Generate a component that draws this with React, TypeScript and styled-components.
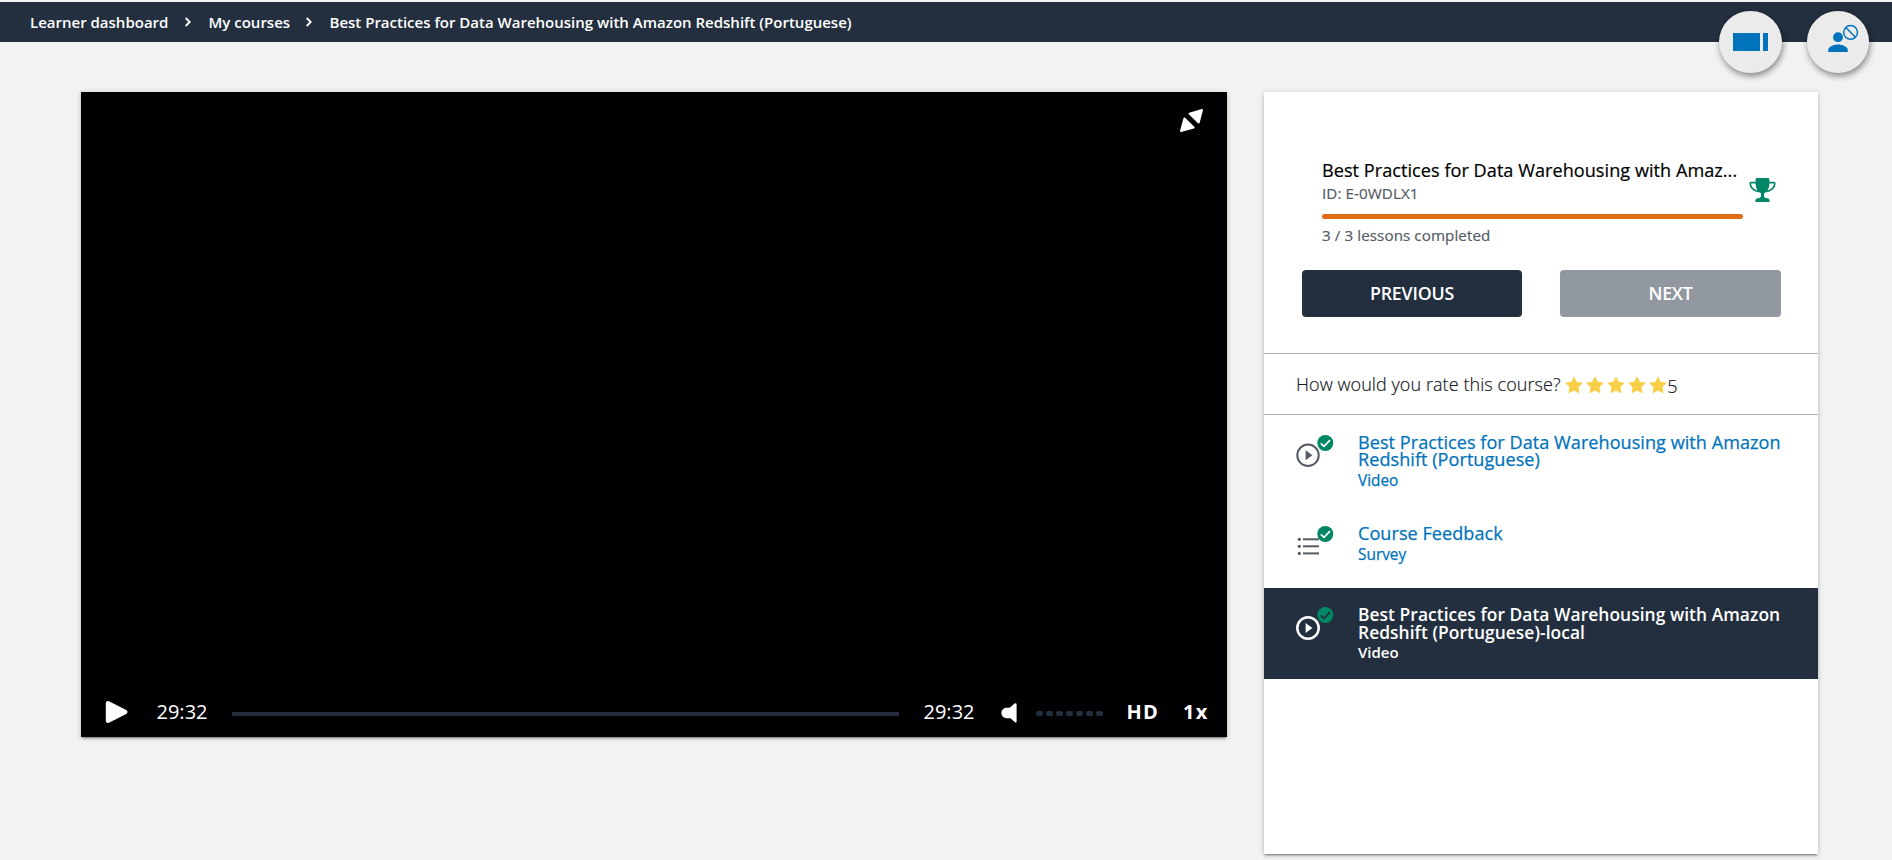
import React from "react";
import styled, { createGlobalStyle } from "styled-components";

const NAVY = "#232f3e";
const BLUE = "#0073bb";
const GREEN = "#018766";

const GlobalStyle = createGlobalStyle`
  * { box-sizing: border-box; }
  body {
    margin: 0;
    background: #f1f3f3;
    font-family: "Open Sans", "Liberation Sans", sans-serif;
    overflow: hidden;
  }
`;

const Page = styled.div`
  height: 860px;
  padding-top: 2px;
`;

const Header = styled.header`
  position: relative;
  height: 40px;
  background: ${NAVY};
`;

const Breadcrumbs = styled.nav`
  display: flex;
  align-items: center;
  height: 40px;
  padding-left: 30px;
  color: #fff;
  font-size: 15px;
  font-weight: 600;
  line-height: 20px;
  white-space: nowrap;
`;

const Crumb = styled.span<{ $width: number }>`
  width: ${(p) => p.$width}px;
`;

const Separator = styled.svg`
  flex: none;
  width: 8px;
  height: 10px;
  margin-left: 16px;
  margin-right: 16.5px;
`;

const FloatingActions = styled.div`
  position: absolute;
  top: 9px;
  right: 23px;
  display: flex;
  gap: 25px;
`;

const RoundButton = styled.button`
  width: 62.5px;
  height: 62px;
  padding: 0;
  border: 0;
  border-radius: 50%;
  background: #ebebeb;
  box-shadow: 1px 3px 6px rgba(0, 0, 0, 0.45);
  svg { display: block; width: 63px; height: 62px; }
`;

const Content = styled.main`
  display: flex;
  align-items: flex-start;
  gap: 37px;
  padding: 50px 74px 0 81px;
`;

const cardShadow = "0 2px 2px -1px rgba(0,0,0,.45), 0 1px 5px rgba(0,0,0,.22)";

const Player = styled.section`
  display: flex;
  flex-direction: column;
  justify-content: space-between;
  width: 1146px;
  height: 645px;
  background: #010002;
  box-shadow: ${cardShadow};
`;

const PlayerTop = styled.div`
  display: flex;
  justify-content: flex-end;
  padding: 17px 24px 0 0;
`;

const Controls = styled.div`
  display: flex;
  align-items: center;
  height: 50px;
  padding-left: 24px;
  color: #fff;
  font-size: 20px;
  line-height: 30px;
`;

const PlayGlyph = styled.svg`
  width: 23px;
  height: 24px;
`;

const Time = styled.span<{ $left: number }>`
  width: 52px;
  margin-left: ${(p) => p.$left}px;
`;

const Track = styled.div`
  width: 667px;
  height: 4px;
  margin: 4px 0 0 23.5px;
  background: ${NAVY};
`;

const Speaker = styled.svg`
  width: 16px;
  height: 20px;
  margin-left: 25.5px;
  margin-top: 2px;
`;

const Volume = styled.div`
  display: flex;
  gap: 3.4px;
  margin: 3px 0 0 19px;
`;

const VolumeStep = styled.i`
  width: 6.6px;
  height: 4.4px;
  border-radius: 2px;
  background: ${NAVY};
`;

const ControlLabel = styled.span<{ $left: number; $width: number }>`
  width: ${(p) => p.$width}px;
  margin-left: ${(p) => p.$left}px;
  font-weight: 700;
  letter-spacing: 1.3px;
`;

const Panel = styled.aside`
  width: 554px;
  height: 762px;
  background: #fff;
  box-shadow: ${cardShadow};
`;

const Summary = styled.div`
  height: 262px;
  padding: 66px 37px 0 38px;
  border-bottom: 1px solid #aab7b8;
`;

const SummaryRow = styled.div`
  display: flex;
  padding-left: 20px;
  height: 87px;
`;

const CourseInfo = styled.div`
  width: 421px;
`;

const CourseTitle = styled.h1`
  margin: 0;
  color: #000;
  font-size: 18.1px;
  font-weight: 400;
  line-height: 24px;
  letter-spacing: 0.04px;
  -webkit-text-stroke: 0.2px;
  white-space: nowrap;
`;

const Detail = styled.div`
  color: #545b64;
  font-size: 15.2px;
  line-height: 20px;
  letter-spacing: 0.08px;
  -webkit-text-stroke: 0.2px;
  margin-top: 1px;
`;

const Progress = styled.div`
  height: 5px;
  margin: 11px 0 6px;
  border-radius: 3px;
  background: #df6c12;
`;

const Trophy = styled.svg`
  width: 27px;
  height: 25px;
  margin: 20px 0 0 6px;
`;

const Buttons = styled.div`
  display: flex;
  justify-content: space-between;
  margin: 25px 0 0;
`;

const NavButton = styled.button<{ $muted?: boolean }>`
  width: ${(p) => (p.$muted ? 221 : 220)}px;
  height: 47px;
  padding: 0;
  border: 0;
  border-radius: 4px;
  background: ${(p) => (p.$muted ? "#91989f" : NAVY)};
  color: #fff;
  font: 600 17.8px/47px "Open Sans", sans-serif;
  letter-spacing: -0.2px;
`;

const Rating = styled.div`
  display: flex;
  align-items: center;
  height: 61px;
  padding-left: 32px;
  border-bottom: 1px solid #aab7b8;
  color: #16191f;
  font-size: 18px;
  font-weight: 300;
  line-height: 24px;
`;

const Question = styled.span`
  width: 268.5px;
  letter-spacing: 0.07px;
  -webkit-text-stroke: 0.2px;
  white-space: nowrap;
`;

const Stars = styled.div`
  display: flex;
  gap: 3.2px;
  margin-top: 1px;
  svg { display: block; width: 18px; height: 18px; }
`;

const Score = styled.span`
  margin-top: 3px;
  -webkit-text-stroke: 0.2px;
`;

const Lessons = styled.ul`
  margin: 0;
  padding: 1px 0 0;
  list-style: none;
`;

const Lesson = styled.li<{ $active?: boolean; $height: number }>`
  display: flex;
  height: ${(p) => p.$height}px;
  padding: 17px 0 0 32px;
  color: ${(p) => (p.$active ? "#fff" : BLUE)};
  background: ${(p) => (p.$active ? NAVY : "transparent")};
`;

const LessonIcon = styled.svg`
  flex: none;
  width: 40px;
  height: 34px;
  margin: 2px 22px 0 0;
`;

const LessonTitle = styled.div<{ $active?: boolean }>`
  padding-top: ${(p) => (p.$active ? 0 : 1)}px;
  font-size: ${(p) => (p.$active ? 17.4 : 18.07)}px;
  font-weight: ${(p) => (p.$active ? 600 : 400)};
  line-height: ${(p) => (p.$active ? 18 : 17)}px;
  letter-spacing: 0.05px;
  -webkit-text-stroke: ${(p) => (p.$active ? 0 : 0.25)}px;
  white-space: pre;
`;

const LessonKind = styled.div<{ $active?: boolean }>`
  margin-top: ${(p) => (p.$active ? 1 : 3)}px;
  font-size: ${(p) => (p.$active ? 15 : 15.4)}px;
  font-weight: ${(p) => (p.$active ? 600 : 400)};
  line-height: 20px;
  -webkit-text-stroke: ${(p) => (p.$active ? 0 : 0.25)}px;
`;

const Chevron = () => (
  <Separator viewBox="0 0 8 10" fill="none" stroke="#fff" strokeWidth="1.8">
    <path d="M1.7 1 L5.7 5 L1.7 9" />
  </Separator>
);

type Kind = "video" | "survey";

const StatusIcon = ({ kind, active }: { kind: Kind; active?: boolean }) => {
  const ink = active ? "#fff" : "#545b64";
  const cy = active ? 21 : 20.3;
  return (
    <LessonIcon viewBox="0 0 40 34">
      {kind === "video" ? (
        <g>
          <circle cx="12" cy={cy} r="10.7" fill="none" stroke={ink} strokeWidth={active ? 2.5 : 2} />
          <path d={`M9.6 ${cy - 5} L16.4 ${cy} L9.6 ${cy + 5} Z`} fill={ink} />
        </g>
      ) : (
        <g fill={ink}>
          {[13.3, 20.3, 27.4].map((y) => (
            <React.Fragment key={y}>
              <circle cx="3.3" cy={y} r="1.6" />
              <rect x="7" y={y - 1} width="16" height="2" />
            </React.Fragment>
          ))}
        </g>
      )}
      <circle cx="29.3" cy="8" r="8" fill={GREEN} />
      <path d="M24.8 8.3 L28 11.4 L34 5.2" fill="none" stroke={active ? NAVY : "#fff"} strokeWidth="1.7" />
    </LessonIcon>
  );
};

const lessons: { title: string; label: string; kind: Kind; height: number; active?: boolean }[] = [
  { title: "Best Practices for Data Warehousing with Amazon\nRedshift (Portuguese)", label: "Video", kind: "video", height: 91 },
  { title: "Course Feedback", label: "Survey", kind: "survey", height: 81 },
  { title: "Best Practices for Data Warehousing with Amazon\nRedshift (Portuguese)-local", label: "Video", kind: "video", height: 91, active: true },
];

export default function App() {
  return (
    <Page>
      <GlobalStyle />
      <Header>
        <Breadcrumbs>
          <Crumb $width={138}>Learner dashboard</Crumb>
          <Chevron />
          <Crumb $width={80.5}>My courses</Crumb>
          <Chevron />
          <Crumb $width={530}>Best Practices for Data Warehousing with Amazon Redshift (Portuguese)</Crumb>
        </Breadcrumbs>
        <FloatingActions>
          <RoundButton aria-label="Toggle sidebar">
            <svg viewBox="0 0 63 62" fill={BLUE}>
              <rect x="14" y="22" width="27" height="18" />
              <rect x="44" y="22" width="5" height="18" />
            </svg>
          </RoundButton>
          <RoundButton aria-label="Presence">
            <svg viewBox="0 0 63 62" fill={BLUE}>
              <circle cx="31" cy="26.2" r="4.9" />
              <path d="M21.2 41 V38.8 C21.2 35.6 27 33.4 31 33.4 C35 33.4 40.8 35.6 40.8 38.8 V41 Z" />
              <g fill="none" stroke={BLUE} strokeWidth="1.5">
                <circle cx="43.6" cy="21.4" r="6.9" />
                <path d="M38.7 16.5 L48.5 26.3" />
              </g>
            </svg>
          </RoundButton>
        </FloatingActions>
      </Header>

      <Content>
        <Player>
          <PlayerTop>
            <svg width="23" height="23" viewBox="0 0 23 23" fill="#fff" stroke="#fff" strokeWidth="2" strokeLinejoin="round">
              <path d="M22 1 L18.7 13.6 L9.5 4.6 Z" />
              <path d="M1 22 L4.4 9.5 L13.6 18.5 Z" />
            </svg>
          </PlayerTop>
          <Controls>
            <PlayGlyph viewBox="0 0 23 24">
              <path d="M3 3.3 L20.2 12 L3 20.7 Z" fill="#fff" stroke="#fff" strokeWidth="4.4" strokeLinejoin="round" />
            </PlayGlyph>
            <Time $left={28.5}>29:32</Time>
            <Track />
            <Time $left={24.5}>29:32</Time>
            <Speaker viewBox="0 0 16 20" fill="#fff">
              <path d="M13.6 0.6 Q15.6 -0.2 15.6 1.6 V18.4 Q15.6 20.2 14 19.3 L9.4 15.2 H5.4 C2.6 15.2 0.4 12.8 0.4 10 C0.4 7.2 2.6 4.8 5.4 4.8 H7.4 Q9 4.8 10.2 3.6 Z" />
            </Speaker>
            <Volume>
              {Array.from({ length: 7 }, (_, i) => (
                <VolumeStep key={i} />
              ))}
            </Volume>
            <ControlLabel $left={24} $width={34}>HD</ControlLabel>
            <ControlLabel $left={22.5} $width={30}>1x</ControlLabel>
          </Controls>
        </Player>

        <Panel>
          <Summary>
            <SummaryRow>
              <CourseInfo>
                <CourseTitle>Best Practices for Data Warehousing with Amaz...</CourseTitle>
                <Detail>ID: E-0WDLX1</Detail>
                <Progress />
                <Detail>3 / 3 lessons completed</Detail>
              </CourseInfo>
              <Trophy viewBox="0 0 27 25" fill={GREEN}>
                <path d="M8 0 H19 Q20.4 0 20.4 1.4 V6 C20.4 10 18.6 13 16 14.6 Q15 15.3 15 16.6 V18.4 L16.4 20 C19 20 20.6 20.8 20.6 22.6 V24 H6.4 V22.6 C6.4 20.8 8 20 10.6 20 L12 18.4 V16.6 Q12 15.3 11 14.6 C8.4 13 6.6 10 6.6 6 V1.4 Q6.6 0 8 0 Z" />
                <path d="M7.5 4.7 H1.9 Q1.2 4.7 1.2 5.6 C1.2 9.6 5 12.9 10.5 13.6 M19.5 4.7 H25.1 Q25.8 4.7 25.8 5.6 C25.8 9.6 22 12.9 16.5 13.6" fill="none" stroke={GREEN} strokeWidth="1.7" />
              </Trophy>
            </SummaryRow>
            <Buttons>
              <NavButton>PREVIOUS</NavButton>
              <NavButton $muted>NEXT</NavButton>
            </Buttons>
          </Summary>
          <Rating>
            <Question>How would you rate this course?</Question>
            <Stars>
              {Array.from({ length: 5 }, (_, i) => (
                <svg key={i} viewBox="0 0 18 18" fill="#f9cf48">
                  <path d="M9 0.2 L11.7 5.7 L17.9 6.7 L13.5 11 L14.5 17.5 L9 14.5 L3.5 17.5 L4.5 11 L0.1 6.7 L6.3 5.7 Z" />
                </svg>
              ))}
            </Stars>
            <Score>5</Score>
          </Rating>
          <Lessons>
            {lessons.map((l, i) => (
              <Lesson key={i} $active={l.active} $height={l.height}>
                <StatusIcon kind={l.kind} active={l.active} />
                <div>
                  <LessonTitle $active={l.active}>{l.title}</LessonTitle>
                  <LessonKind $active={l.active}>{l.label}</LessonKind>
                </div>
              </Lesson>
            ))}
          </Lessons>
        </Panel>
      </Content>
    </Page>
  );
}
